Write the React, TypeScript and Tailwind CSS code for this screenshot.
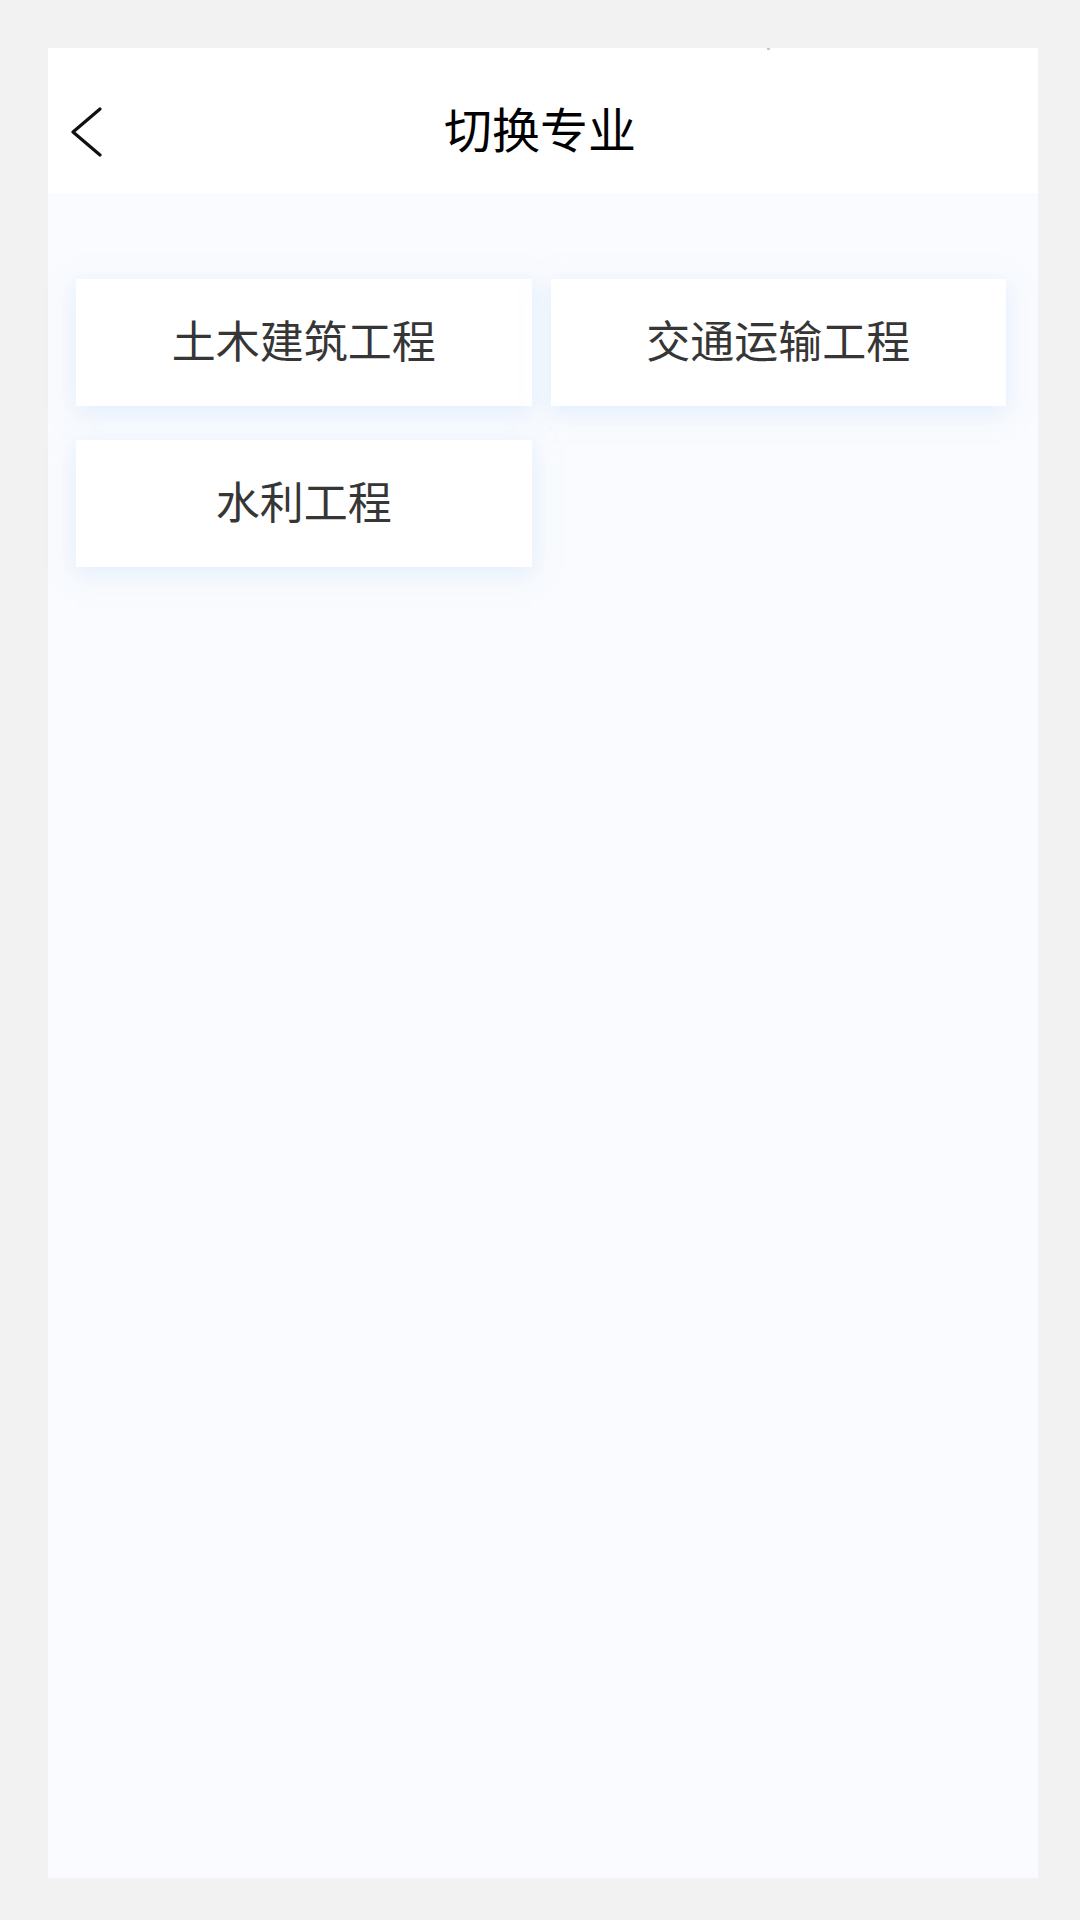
import React from "react";

const majors = ["土木建筑工程", "交通运输工程", "水利工程"];

export default function App() {
  return (
    <div
      className="w-[1080px] h-[1920px] bg-[#f2f2f2] pt-[48px] pl-[48px]"
      style={{ fontFamily: '"Noto Sans CJK SC", "Noto Sans", sans-serif' }}
    >
      <div className="w-[990px] h-[1830px] flex flex-col">
        <div className="h-[145px] bg-white pt-[20px] grid grid-cols-[100px_1fr_106px] items-center relative">
          <div className="pl-[22px] flex items-center pt-[2px]">
            <svg width="32" height="52" viewBox="0 0 32 52" fill="none">
              <polyline
                points="30,3 3,26 30,49"
                stroke="#111"
                strokeWidth="3.2"
                strokeLinecap="round"
                strokeLinejoin="round"
              />
            </svg>
          </div>
          <div className="text-center text-[48px] leading-none text-black pb-[8px]">切换专业</div>
          <div />
          <span className="absolute top-0 left-[719px] w-[3px] h-[2px] bg-[#c8c8c8]" />
        </div>
        <div className="flex-1 bg-[#f9fbfe] pt-[86px] pl-[28px] pr-[32px]">
          <div className="grid grid-cols-2 gap-x-[19px] gap-y-[34px]">
            {majors.map((m) => (
              <div
                key={m}
                className="h-[127px] bg-white flex items-center justify-center shadow-[0_6px_22px_rgba(205,225,250,0.55)]"
              >
                <span className="text-[44px] leading-none text-[#363636] pb-[8px]">{m}</span>
              </div>
            ))}
          </div>
        </div>
      </div>
    </div>
  );
}
